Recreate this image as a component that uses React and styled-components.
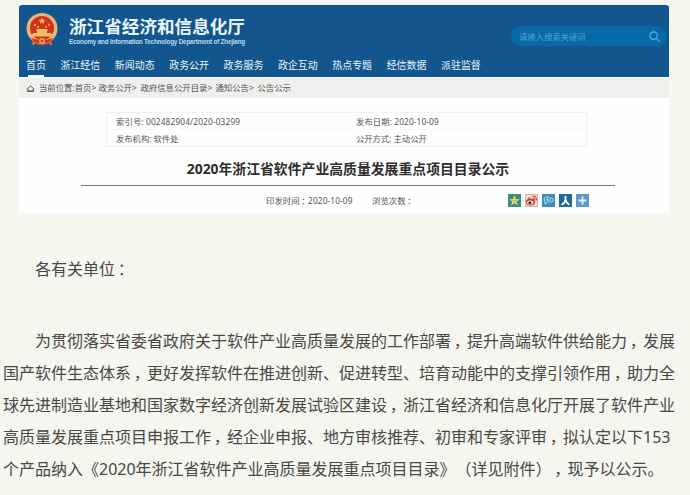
import React from "react";
import styled, { createGlobalStyle } from "styled-components";

const GlobalStyle = createGlobalStyle`
  * { box-sizing: border-box; }
  body {
    margin: 0;
    background: #f5f6ee;
    font-family: "Noto Sans", "Noto Sans CJK SC", sans-serif;
    text-spacing-trim: space-all;
  }
`;

const Page = styled.main`
  width: 690px;
  height: 495px;
  padding-top: 5px;
  overflow: hidden;
`;
const Portal = styled.section`
  width: 650px;
  height: 208px;
  margin-left: 19px;
  background: #fefefe;
`;
const Header = styled.header`
  height: 72px;
  border-radius: 3px 3px 0 0;
  background: #12568d;
  color: #e9f5fc;
`;
const Brand = styled.div`
  display: flex;
  height: 50px;
  padding: 7px 2px 0 7px;
`;
const Emblem = styled.svg`
  width: 32px;
  height: 36px;
  flex: none;
`;
const Names = styled.div`
  margin-left: 11px;
  width: 200px;
  white-space: nowrap;
`;
const SiteName = styled.div`
  height: 24px;
  margin-top: 2px;
  font-size: 17.6px;
  line-height: 24px;
  font-weight: 700;
`;
const SiteNameEn = styled.div`
  font: 700 6.4px/8px "Liberation Sans", sans-serif;
  color: #b4daf2;
  letter-spacing: -0.23px;
`;
const Search = styled.div`
  display: flex;
  align-items: center;
  justify-content: space-between;
  width: 156px;
  height: 20px;
  margin: 14px 0 0 auto;
  padding: 0 7px 0 8px;
  border-radius: 10px;
  background: #0869a8;
  color: #4f9fce;
  font-size: 8.3px;
`;
const Nav = styled.nav`
  display: flex;
  gap: 14.6px;
  padding-left: 7px;
  height: 22px;
`;
const NavItem = styled.a`
  font-size: 9.95px;
  line-height: 20px;
  white-space: nowrap;
  height: 22px;
  background: ${(p) =>
    p.$active
      ? "linear-gradient(#e9f5fc, #e9f5fc) center bottom / 16px 2px no-repeat"
      : "none"};
`;
const Breadcrumb = styled.div`
  display: flex;
  align-items: center;
  height: 21px;
  padding-left: 7px;
  border-top: 1px solid #fafafa;
  background: #f0efee;
  color: #555;
  font-size: 8.4px;
  line-height: 20px;
`;
const HomeIcon = styled.svg`
  width: 9px;
  height: 7px;
  margin-right: 4px;
`;
const Crumb = styled.span`
  flex: none;
  width: ${(p) => p.$w}px;
  white-space: nowrap;
`;
const InfoTable = styled.div`
  display: grid;
  grid-template-columns: 240px 1fr;
  grid-auto-rows: 16.5px;
  width: 482px;
  margin: 14px 0 0 87px;
  border: 1px solid #f1f1f1;
`;
const InfoCell = styled.div`
  padding-left: 9px;
  border-bottom: 1px solid #f7f7f7;
  font-size: 8.3px;
  line-height: 17px;
  color: #555;
  white-space: nowrap;
  letter-spacing: ${(p) => p.$ls || 0}px;
`;
const Title = styled.h1`
  width: 534px;
  height: 34px;
  margin: 5px 0 0 62px;
  border-bottom: 1px solid #777;
  color: #2d2d2d;
  font-size: 13.85px;
  line-height: 33px;
  font-weight: 700;
  text-align: center;
  white-space: nowrap;
`;
const Meta = styled.div`
  display: flex;
  align-items: center;
  height: 28px;
  padding-left: 247px;
  color: #555;
  font-size: 8.3px;
`;
const MetaItem = styled.span`
  width: ${(p) => p.$w}px;
  letter-spacing: 0.13px;
  white-space: nowrap;
`;
const Share = styled.div`
  display: flex;
  gap: 4px;
`;
const ShareIcon = styled.svg`
  width: 13px;
  height: 13px;
`;
const Article = styled.article`
  padding: 40px 0 0 3px;
  color: #484848;
  font-size: 16px;
  line-height: 32px;
`;
const Line = styled.div`
  height: 32px;
  padding-left: ${(p) => (p.$indent ? 32 : 0)}px;
  white-space: nowrap;
`;
const Salutation = styled(Line)`
  margin-bottom: 40px;
`;
/* Nudges fullwidth punctuation towards the middle of its cell. */
const Mark = styled.span`
  margin-left: 0.17em;
  letter-spacing: -0.17em;
`;

const nav = ["首页", "浙江经信", "新闻动态", "政务公开", "政务服务", "政企互动", "热点专题", "经信数据", "派驻监督"];
const crumbs = [
  ["当前位置:首页>", 59.5],
  ["政务公开>", 42],
  ["政府信息公开目录>", 75],
  ["通知公告>", 42],
  ["公告公示", 40],
];
const lines = [
  "为贯彻落实省委省政府关于软件产业高质量发展的工作部署，提升高端软件供给能力，发展",
  "国产软件生态体系，更好发挥软件在推进创新、促进转型、培育动能中的支撑引领作用，助力全",
  "球先进制造业基地和国家数字经济创新发展试验区建设，浙江省经济和信息化厅开展了软件产业",
  "高质量发展重点项目申报工作，经企业申报、地方审核推荐、初审和专家评审，拟认定以下153",
  "个产品纳入《2020年浙江省软件产业高质量发展重点项目目录》（详见附件），现予以公示。",
];
const star = "M0-5 1.3-1.7 4.8-1.5 2.1.7 3 4.1 0 2.2-3 4.1-2.1.7-4.8-1.5-1.3-1.7Z";

function Prose({ text }) {
  return text
    .split(/([，：])/)
    .map((part, i) => (part === "，" || part === "：" ? <Mark key={i}>{part}</Mark> : part));
}

function NationalEmblem() {
  return (
    <Emblem viewBox="0 0 32 36">
      <path d="M7 28 5 33l6-1 5 2 5-2 6 1-2-5Z" fill="#c8402e" />
      <circle cx="16" cy="16.5" r="15.5" fill="#e2b877" />
      <circle cx="16" cy="16" r="12" fill="#d6301f" />
      <path d={star} transform="translate(16 9) scale(.72)" fill="#f5c85c" />
      {[[9, 13], [12, 15], [20, 15], [23, 13]].map(([x, y]) => (
        <path key={x} d={star} transform={`translate(${x} ${y}) scale(.3)`} fill="#f5c85c" />
      ))}
      <path d="M11 17h10l1 2h-1v2h4l2 3.5H5L7 21h4v-2h-1Z" fill="#f0c068" />
      <path d="M5 26q11 4 22 0l-3 4q-8 3-16 0Z" fill="#cf3a28" />
      <circle cx="16" cy="29" r="3" fill="#e0a060" />
      <circle cx="16" cy="29" r="1.3" fill="#cf3a28" />
      <path d="m8 30-1 3m17-3 1 3" stroke="#e2a968" fill="none" />
    </Emblem>
  );
}

function ShareIcons() {
  return (
    <Share>
      <ShareIcon viewBox="0 0 13 13">
        <rect width="13" height="13" fill="#3b8b86" />
        <path d={star} transform="translate(6.5 6.8) scale(1.1)" fill="#e8dc62" />
        <path d="m4.5 6.5 4-.5-3 3h3" stroke="#8fae55" strokeWidth=".6" fill="none" />
      </ShareIcon>
      <ShareIcon viewBox="0 0 13 13">
        <rect x=".5" y=".5" width="12" height="12" fill="#f3d9cf" stroke="#dfb4a6" />
        <ellipse cx="5.5" cy="8" rx="4.5" ry="3.5" fill="#cf3f38" />
        <ellipse cx="5.2" cy="8.5" rx="3" ry="2.1" fill="#fff" />
        <circle cx="4.9" cy="8.7" r="1.5" fill="#2a2024" />
        <path d="M7.5 2.2q4-.5 4 4M8 4.4q2-.2 1.8 1.8M3 4.5l2-1" stroke="#cf4a40" strokeWidth="1.1" fill="none" />
      </ShareIcon>
      <ShareIcon viewBox="0 0 13 13">
        <rect width="13" height="13" fill="#3c8cbc" />
        <path d="M3 10V8Q1.5 6 2.5 4T6 3t2.4 2.7T5.5 8.5L3 10M8.5 3.8q2.8 0 2.8 2T8.6 8" stroke="#b5e0f3" fill="none" />
        <circle cx="5.4" cy="5.7" r="1.2" fill="#b5e0f3" />
      </ShareIcon>
      <ShareIcon viewBox="0 0 13 13">
        <rect width="13" height="13" fill="#1f6a9f" />
        <path d="M6.5 2v3.5q0 3-3.8 5.3M6.5 5.5q.4 3 3.8 5.3" stroke="#fff" strokeWidth="1.8" fill="none" />
      </ShareIcon>
      <ShareIcon viewBox="0 0 13 13">
        <rect width="13" height="13" fill="#5f97cc" />
        <path d="M6.5 2.5v8M2.5 6.5h8" stroke="#e3f1fb" strokeWidth="1.8" />
      </ShareIcon>
    </Share>
  );
}

export default function App() {
  return (
    <Page>
      <GlobalStyle />
      <Portal>
        <Header>
          <Brand>
            <NationalEmblem />
            <Names>
              <SiteName>浙江省经济和信息化厅</SiteName>
              <SiteNameEn>Economy and Information Technology Department of Zhejiang</SiteNameEn>
            </Names>
            <Search>
              请输入搜索关键词
              <svg width="11" height="11" viewBox="0 0 11 11" fill="none" stroke="#5fb0dc" strokeWidth="1.2">
                <circle cx="4.6" cy="4.6" r="3.7" />
                <path d="m7.4 7.4 3.1 3.1" />
              </svg>
            </Search>
          </Brand>
          <Nav>
            {nav.map((n, i) => (
              <NavItem key={n} $active={i === 0}>{n}</NavItem>
            ))}
          </Nav>
        </Header>
        <Breadcrumb>
          <HomeIcon viewBox="0 0 9 7">
            <path d="M.8 4 4.5 1l3.7 3M2 4v2h5V4M.8 6.3h7.4" stroke="#555" fill="none" />
          </HomeIcon>
          {crumbs.map(([t, w]) => (
            <Crumb key={t} $w={w}>{t}</Crumb>
          ))}
        </Breadcrumb>
        <InfoTable>
          <InfoCell $ls={0.15}>索引号: 002482904/2020-03299</InfoCell>
          <InfoCell $ls={0.12}>发布日期: 2020-10-09</InfoCell>
          <InfoCell>发布机构: 软件处</InfoCell>
          <InfoCell>公开方式: 主动公开</InfoCell>
        </InfoTable>
        <Title>2020年浙江省软件产业高质量发展重点项目目录公示</Title>
        <Meta>
          <MetaItem $w={106}><Prose text="印发时间：2020-10-09" /></MetaItem>
          <MetaItem $w={136}><Prose text="浏览次数：" /></MetaItem>
          <ShareIcons />
        </Meta>
      </Portal>
      <Article>
        <Salutation $indent><Prose text="各有关单位：" /></Salutation>
        {lines.map((l, i) => (
          <Line key={l} $indent={i === 0}><Prose text={l} /></Line>
        ))}
      </Article>
    </Page>
  );
}
